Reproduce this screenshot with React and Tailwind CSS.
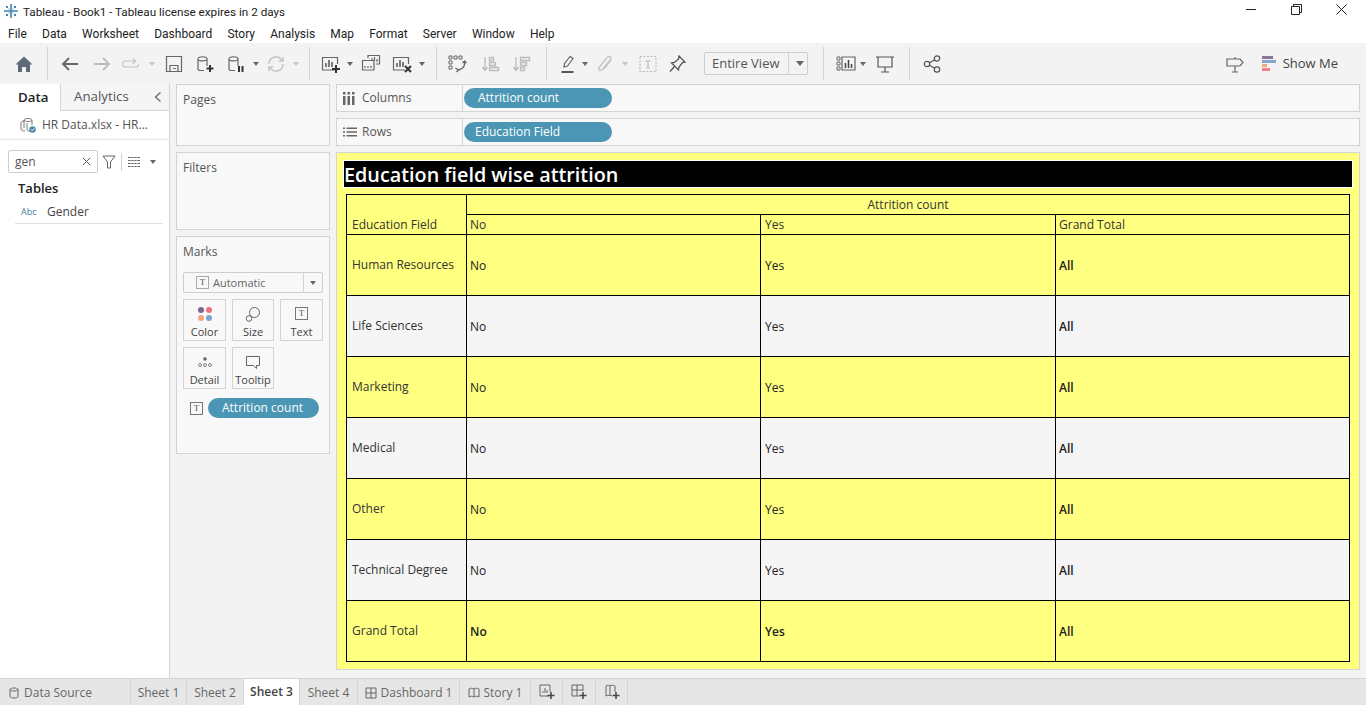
const sans = "font-['Open_Sans',sans-serif]";

function Caret({ className = '', light }) {
    return <div className={`h-0 w-0 border-x-[3px] border-t-[4px] border-x-transparent ${light ? 'border-t-[#c4c4c4]' : 'border-t-[#666]'} ${className}`}></div>
}

function Divider({ className = '' }) {
    return <div className={`h-[33px] w-px bg-[#d4d4d4] ${className}`}></div>
}

function Ico({ className = '', children, stroke = '#666' }) {
    return (
        <svg viewBox="0 0 20 20" fill="none" stroke={stroke} strokeWidth="1.2" className={`h-5 w-5 shrink-0 ${className}`}>
            {children}
        </svg>
    )
}

function Cylinder() {
    return <path d="M3 5c0-3 9-3 9 0v7M3 5c0 2.500 9 2.500 9 0M3 5v10c0 .8 1 1.500 3 1.500h3" />
}

function Toolbar() {
    return (
        <div className="flex h-[41px] items-center bg-[#f3f3f3]">
            <Ico className="ml-[14px]" stroke="none"><path fill="#5f6b78" d="M10 2.500 1.500 10.500H4V18h4v-5h4v5h4v-7.500h2.500z" /></Ico>
            <Divider className="ml-[13px]" />
            <Ico className="ml-[12px]" stroke="#666"><path strokeWidth="1.800" d="M18 10H3M9 4l-6 6 6 6" /></Ico>
            <Ico className="ml-[12px]" stroke="#bbb"><path strokeWidth="1.800" d="M2 10h15M11 4l6 6-6 6" /></Ico>
            <Ico className="ml-[9px]" stroke="#c4c4c4"><path d="M14 7H4.500a2.500 2.500 0 0 0 0 6H15a2.500 2.500 0 0 0 2.500-2.500M12 4.500 14.500 7 12 9.500" /></Ico>
            <Caret light className="ml-[8px]" />
            <Ico className="ml-[9px]"><path d="M2.500 2.500h15v15h-15zM6 17.500v-6h8v6M9 14.500h3" /></Ico>
            <Ico className="ml-[11px]">
                <Cylinder />
                <path stroke="#333" strokeWidth="2" d="M15 11v7M11.500 14.500h7" />
            </Ico>
            <Ico className="ml-[11px]">
                <Cylinder />
                <path stroke="#333" strokeWidth="2" d="M13 12v6M16.500 12v6" />
            </Ico>
            <Caret className="ml-[7px]" />
            <Ico className="ml-[7px]" stroke="#c4c4c4"><path strokeWidth="1.500" d="M3 10a7 7 0 0 1 12-5l2 2M17 10a7 7 0 0 1-12 5l-2-2M17 3v4h-4M3 17v-4h4" /></Ico>
            <Caret light className="ml-[7px]" />
            <Divider className="ml-[10px]" />
            <Ico className="ml-[11px]">
                <path d="M14 16H1.500V3.500h15V10" />
                <path stroke="#555" strokeWidth="1.500" d="M5 13V9M8 13V6M11 13V8" />
                <path stroke="#333" strokeWidth="2" d="M15 11v8M11 15h8" />
            </Ico>
            <Caret className="ml-[6px]" />
            <Ico className="ml-[8px]">
                <path d="M7 4V1.500h11.500V10H15M1.500 6.500H13V16H1.500z" />
                <path d="M11 6.500V4M13.500 6.500V3M16 8V5M4 14v-2M7 14v-2M10 14v-2" />
            </Ico>
            <Ico className="ml-[11px]">
                <path d="M13 16H1.500V3.500h15V10" />
                <path stroke="#555" strokeWidth="1.500" d="M5 13V9M8 13V6M11 13V8" />
                <path stroke="#333" strokeWidth="2" d="m13 12 6 6M19 12l-6 6" />
            </Ico>
            <Caret className="ml-[7px]" />
            <Divider className="ml-[11px]" />
            <Ico className="ml-[10px]">
                <path d="M2 2h3v3H2zM7 2h3v3H7zM12 2h3v3h-3zM2 7h3v3H2zM2 12h3v3H2z" strokeWidth="1" />
                <path strokeWidth="1.400" d="M17.500 7c1 4-1 8-6 9M8.500 14l3 2-2 2M15.500 9l2-2 2 2" />
            </Ico>
            <Ico className="ml-[13px]" stroke="#bbb"><path strokeWidth="1.300" d="M5 3v13M2.500 13 5 16.500 7.500 13M9.500 3.500h4v3h-4zM9.500 8.500h6v3h-6zM9.500 13.500h9v3h-9z" /></Ico>
            <Ico className="ml-[11px]" stroke="#bbb"><path strokeWidth="1.300" d="M5 3v13M2.500 13 5 16.500 7.500 13M9.500 3.500h9v3h-9zM9.500 8.500h6v3h-6zM9.500 13.500h4v3h-4z" /></Ico>
            <Divider className="ml-[15px]" />
            <Ico className="ml-[11px]">
                <path d="m6 13 .5-3.500L12 2.500l3 2-5.500 7.500z" />
                <path stroke="#444" strokeWidth="1.800" d="M3.500 18h12" />
            </Ico>
            <Caret className="ml-[4px]" />
            <Ico className="ml-[7px]" stroke="#c4c4c4"><path strokeWidth="1.400" d="m15 6-7.500 9.500c-2.500 2.500-5-.5-3-2.500L11.500 4c2.500-3 6 0 4 2.500L9 15" /></Ico>
            <Caret light className="ml-[7px]" />
            <Ico className="ml-[10px]" stroke="#bbb">
                <path strokeDasharray="2 1.500" d="M2 2.500h16v15H2z" />
                <path d="M7 7h6M10 7v7M8.500 14h3" />
            </Ico>
            <Ico className="ml-[9px]" stroke="#555"><path strokeWidth="1.300" d="M12 2 18 8l-2.500.5L12 13l-.5 3L4.500 9l3-.5 4-3.500zM7.500 12.500 3 17.500" /></Ico>
            <div className="ml-[17px] flex h-[23px] w-[104px] items-center rounded-[2px] border border-[#cdcdcd] text-[13px] text-[#555]">
                <span className="w-[84px] border-r border-[#d4d4d4] pl-[7px] leading-[21px]">Entire View</span>
                <Caret className="ml-[7px] border-x-[4px] border-t-[5px]" />
            </div>
            <Divider className="ml-[15px]" />
            <Ico className="ml-[12px]">
                <path strokeWidth="1" d="M1 3h3v3H1zM1 8h3v3H1zM1 13h3v3H1z" />
                <path d="M6 3h13v13H6z" />
                <path stroke="#444" strokeWidth="1.500" d="M9.500 14V9M12.500 14V6M15.500 14v-4" />
            </Ico>
            <Caret className="ml-[4px]" />
            <Ico className="ml-[9px]" stroke="#555"><path d="M3 3h14v10H3zM1 3h18M10 13v5M6 18h8" /></Ico>
            <Divider className="ml-[14px]" />
            <Ico className="ml-[12px]" stroke="#555"><circle cx="5" cy="10" r="2.700" /><circle cx="15" cy="4.500" r="2.700" /><circle cx="15" cy="15.500" r="2.700" /><path d="m7.500 8.800 5.200-3M7.500 11.200l5.200 3" /></Ico>
            <Ico className="ml-auto" stroke="#666"><path d="M2 5h13l3 3.500-3 3.500H2zM10 3v2M10 12v6M7 18h6" /></Ico>
            <div className="ml-[17px] flex w-[15px] flex-col gap-[1px]">
                <div className="h-[3px] w-[11px] bg-[#8a759e]"></div>
                <div className="h-[3px] w-[14px] bg-[#86a6cd]"></div>
                <div className="h-[3px] w-[5px] bg-[#f2a77c]"></div>
                <div className="h-[3px] w-[8px] bg-[#f27d85]"></div>
            </div>
            <span className="ml-[6px] mr-[28px] text-[13px] text-[#444]">Show Me</span>
        </div>
    )
}

function LeftPanel() {
    return (
        <div className="flex w-[170px] shrink-0 flex-col border-r border-[#d4d4d4] bg-white">
            <div className="flex h-[27px] bg-[#f5f5f5]">
                <div className="flex w-[61px] items-center border-r border-[#d4d4d4] bg-white pl-[18px] text-[13.300px] font-semibold text-[#222]">Data</div>
                <div className="flex flex-1 items-center justify-between border-b border-[#d4d4d4] pl-[13px] pr-[6px] text-[13.300px] text-[#555]">
                    <span>Analytics</span>
                    <svg viewBox="0 0 10 12" fill="none" stroke="#666" strokeWidth="1.200" className="h-3 w-[10px]"><path d="M7.500 1.500 2.500 6l5 4.500" /></svg>
                </div>
            </div>
            <div className="flex h-[29px] items-center border-b border-[#e6e6e6] pl-[20px] text-[12px] text-[#555]">
                <svg viewBox="0 0 16 16" fill="none" stroke="#777" strokeWidth="1" className="h-4 w-4 shrink-0">
                    <path d="M4 3c0-2 8-2 8 0v5M4 3c0 2 8 2 8 0M4 3v8M1 6c0-1 1-2 3-2M1 6v6c0 1.500 2 2 4 2M7 6v6c0 1.500 1 2 3 2" />
                    <circle cx="12.500" cy="12.500" r="3.300" fill="#4a8ea8" stroke="none" />
                    <path stroke="#fff" strokeWidth="0.900" d="m11 12.500 1.200 1.200 2-2.200" />
                </svg>
                <span className="ml-[6px]">HR Data.xlsx - HR...</span>
            </div>
            <div className="mt-[10px] flex items-center pl-[8px]">
                <div className="flex h-[23px] w-[90px] items-center justify-between rounded-[2px] border border-[#cdcdcd] pl-[6px] pr-[6px] text-[12px] text-[#555]">
                    <span>gen</span>
                    <svg viewBox="0 0 10 10" stroke="#555" strokeWidth="1.100" className="h-[9px] w-[9px]"><path d="m1 1 8 8M9 1 1 9" /></svg>
                </div>
                <svg viewBox="0 0 14 14" fill="none" stroke="#666" strokeWidth="1" className="ml-[4px] h-[14px] w-[14px]"><path d="M1 1h12L8.500 7v6h-3V7z" /></svg>
                <div className="ml-[5px] h-[18px] w-px bg-[#d4d4d4]"></div>
                <svg viewBox="0 0 12 10" stroke="#666" strokeWidth="1" className="ml-[6px] h-[10px] w-[12px]"><path d="M0 .5h12M0 3.500h12M0 6.500h12M0 9.500h12" /><path stroke="#fff" strokeWidth="0.700" d="M3 0v10M6 0v10M9 0v10" /></svg>
                <Caret className="ml-[10px]" />
            </div>
            <div className="mt-[6px] pl-[18px] text-[13px] font-semibold leading-[18px] text-[#222]">Tables</div>
            <div className="ml-[15px] mr-[6px] mt-[8px] flex h-[19px] items-center border-b border-[#e0e0e0] pb-[4px] pl-[6px] text-[12px] text-[#444]">
                <span className="w-[26px] text-[9px] text-[#4a7f99]">Abc</span>
                <span>Gender</span>
            </div>
        </div>
    )
}

function Card({ title, className = '', children }) {
    return (
        <div className={`border border-[#d4d4d4] bg-[#f8f8f8] px-[6px] pt-[6px] text-[12px] text-[#555] ${className}`}>
            <div className="leading-[17px]">{title}</div>
            {children}
        </div>
    )
}

function MarkBtn({ label, children }) {
    return (
        <div className="flex h-[42px] flex-col items-center border border-[#d4d4d4] pt-[2px] text-[11px] leading-[14px] text-[#444]">
            <div className="flex h-[23px] items-center">{children}</div>
            <span>{label}</span>
        </div>
    )
}

function TBox({ className = '' }) {
    return <div className={`flex h-[13px] w-[13px] items-center justify-center border border-[#777] font-['Liberation_Serif',serif] text-[9px] leading-none text-[#555] ${className}`}>T</div>
}

function Pill({ children, className = '' }) {
    return <div className={`flex h-[20px] items-center rounded-full bg-[#4a96b4] text-[12px] text-white ${className}`}>{children}</div>
}

function ShelfColumn() {
    return (
        <div className="flex w-[166px] shrink-0 flex-col gap-[6px] pl-[6px] pr-[6px]">
            <Card title="Pages" className="h-[62px]" />
            <Card title="Filters" className="h-[78px]" />
            <Card title="Marks" className="h-[218px]">
                <div className="mt-[12px] flex h-[21px] items-center rounded-[2px] border border-[#cdcdcd]">
                    <div className="flex flex-1 items-center border-r border-[#d4d4d4] pl-[12px] text-[11px] leading-[19px] text-[#666]">
                        <TBox className="border-[#aaa]" />
                        <span className="ml-[4px]">Automatic</span>
                    </div>
                    <Caret className="mx-[6px] border-x-[3.500px]" />
                </div>
                <div className="mt-[6px] grid grid-cols-[43px_42px_43px] gap-x-[6px] gap-y-[6px]">
                    <MarkBtn label="Color">
                        <div className="grid grid-cols-2 gap-[2px]">
                            <div className="h-[6px] w-[6px] rounded-full bg-[#7b668f]"></div>
                            <div className="h-[6px] w-[6px] rounded-full bg-[#f26d7d]"></div>
                            <div className="h-[6px] w-[6px] rounded-full bg-[#f2a77c]"></div>
                            <div className="h-[6px] w-[6px] rounded-full bg-[#7da5cf]"></div>
                        </div>
                    </MarkBtn>
                    <MarkBtn label="Size">
                        <svg viewBox="0 0 16 16" fill="none" stroke="#666" strokeWidth="1" className="h-4 w-4"><circle cx="9.500" cy="6.500" r="5" /><circle cx="4" cy="12.500" r="2.800" fill="#f8f8f8" /></svg>
                    </MarkBtn>
                    <MarkBtn label="Text"><TBox /></MarkBtn>
                    <MarkBtn label="Detail">
                        <svg viewBox="0 0 16 12" fill="none" stroke="#666" strokeWidth="0.800" className="h-3 w-4"><circle cx="8" cy="3" r="1.800" fill="#666" stroke="none" /><circle cx="3" cy="9" r="1.500" /><circle cx="8" cy="9" r="1.500" /><circle cx="13" cy="9" r="1.500" /></svg>
                    </MarkBtn>
                    <MarkBtn label="Tooltip">
                        <svg viewBox="0 0 16 16" fill="none" stroke="#666" strokeWidth="1" className="h-4 w-4"><path d="M1.500 2.500h13v9h-3v3l-3-3h-7z" /></svg>
                    </MarkBtn>
                </div>
                <div className="mt-[9px] flex items-center pl-[7px]">
                    <TBox />
                    <Pill className="ml-[5px] w-[111px] pl-[14px]">Attrition count</Pill>
                </div>
            </Card>
        </div>
    )
}

function Shelf({ label, icon, pill, pillClass }) {
    return (
        <div className="flex h-[28px] items-center border border-[#d4d4d4] bg-[#f8f8f8] text-[12px] text-[#555]">
            <div className="flex w-[126px] shrink-0 items-center border-r border-[#d4d4d4] pl-[6px] leading-[26px]">
                <div className="flex w-[13px] justify-start">{icon}</div>
                <span className="ml-[6px]">{label}</span>
            </div>
            <Pill className={`ml-[1px] w-[148px] ${pillClass}`}>{pill}</Pill>
        </div>
    )
}

const rows = ['Human Resources', 'Life Sciences', 'Marketing', 'Medical', 'Other', 'Technical Degree']

function DataTable() {
    const cell = 'border border-black align-middle'
    return (
        <table className="ml-[3px] mt-[6px] w-[1003px] table-fixed border-collapse text-[12px] text-[#333]">
            <colgroup>
                <col className="w-[120px]" />
                <col className="w-[294px]" />
                <col className="w-[295px]" />
                <col className="w-[294px]" />
            </colgroup>
            <tbody>
                <tr className="h-[20px]">
                    <td rowSpan={2} className={`${cell} pl-[5px] pt-[20px]`}>Education Field</td>
                    <td colSpan={3} className={`${cell} text-center`}>Attrition count</td>
                </tr>
                <tr className="h-[20px]">
                    <td className={`${cell} pl-[3px]`}>No</td>
                    <td className={`${cell} pl-[4px]`}>Yes</td>
                    <td className={`${cell} pl-[3px]`}>Grand Total</td>
                </tr>
                {rows.map((r, i) => (
                    <tr key={r} className={`h-[61px] ${i % 2 ? 'bg-[#f5f5f5]' : ''}`}>
                        <td className={`${cell} pl-[5px]`}>{r}</td>
                        <td className={`${cell} pl-[3px] pt-[2px] text-[#222]`}>No</td>
                        <td className={`${cell} pl-[4px] pt-[2px] text-[#222]`}>Yes</td>
                        <td className={`${cell} pl-[3px] pt-[2px] font-semibold text-[#222]`}>All</td>
                    </tr>
                ))}
                <tr className="h-[61px]">
                    <td className={`${cell} pl-[5px]`}>Grand Total</td>
                    <td className={`${cell} pl-[3px] pt-[2px] font-semibold text-[#222]`}>No</td>
                    <td className={`${cell} pl-[4px] pt-[2px] font-semibold text-[#222]`}>Yes</td>
                    <td className={`${cell} pl-[3px] pt-[2px] font-semibold text-[#222]`}>All</td>
                </tr>
            </tbody>
        </table>
    )
}

function SheetTab({ children, className = '' }) {
    return <div className={`flex items-center justify-center border-r border-[#d4d4d4] ${className}`}>{children}</div>
}

function TabStrip() {
    return (
        <div className="flex h-[27px] border-t border-[#d4d4d4] bg-[#e6e6e6] text-[12px] text-[#666]">
            <SheetTab className="w-[131px] justify-start pl-[9px] pt-[1px]">
                <svg viewBox="0 0 10 12" fill="none" stroke="#666" strokeWidth="1" className="h-3 w-[10px]"><path d="M1 2.500c0-2 8-2 8 0v7c0 2-8 2-8 0zM1 2.500c0 2 8 2 8 0" /></svg>
                <span className="ml-[5px]">Data Source</span>
            </SheetTab>
            <SheetTab className="w-[56px] pt-[1px]">Sheet 1</SheetTab>
            <SheetTab className="w-[57px] pt-[1px]">Sheet 2</SheetTab>
            <SheetTab className="w-[56px] bg-white pb-[1px] font-semibold text-[#444]">Sheet 3</SheetTab>
            <SheetTab className="w-[58px] pt-[1px]">Sheet 4</SheetTab>
            <SheetTab className="w-[102px] pt-[1px]">
                <svg viewBox="0 0 12 12" fill="none" stroke="#666" strokeWidth="1" className="h-3 w-3"><path d="M1 1h10v10H1zM6 1v10M1 6h10" /></svg>
                <span className="ml-[4px]">Dashboard 1</span>
            </SheetTab>
            <SheetTab className="w-[71px] pt-[1px]">
                <svg viewBox="0 0 12 12" fill="none" stroke="#666" strokeWidth="1" className="h-3 w-3"><path d="M1 2c2-1 3-1 5 0 2-1 3-1 5 0v8c-2-1-3-1-5 0-2-1-3-1-5 0zM6 2v8" /></svg>
                <span className="ml-[4px]">Story 1</span>
            </SheetTab>
            <SheetTab className="w-[32px]">
                <svg viewBox="0 0 16 16" fill="none" stroke="#666" strokeWidth="1" className="h-4 w-4"><path d="M10 12H1V1h10v7" /><path d="M4 9V7M6 9V4M8 9V6" /><path stroke="#444" strokeWidth="1.500" d="M12 8v7M8.500 11.500h7" /></svg>
            </SheetTab>
            <SheetTab className="w-[33px]">
                <svg viewBox="0 0 16 16" fill="none" stroke="#666" strokeWidth="1" className="h-4 w-4"><path d="M8 12H1V1h11v6M6 1v11M1 6h11" /><path stroke="#444" strokeWidth="1.500" d="M12 8v7M8.500 11.500h7" /></svg>
            </SheetTab>
            <SheetTab className="w-[32px]">
                <svg viewBox="0 0 16 16" fill="none" stroke="#666" strokeWidth="1" className="h-4 w-4"><path d="M8 12c-2-1-4-1-6 0V2c2-1 3-1 4 0 1-1 3-1 5 0v6M6 2v10" /><path stroke="#444" strokeWidth="1.500" d="M12 8v7M8.500 11.500h7" /></svg>
            </SheetTab>
        </div>
    )
}

export default function App() {
    return (
        <div className={`flex h-[705px] w-[1366px] flex-col overflow-hidden bg-white ${sans}`}>
            {/* title bar */}
            <div className="flex h-[22px] items-start pl-[3px] pt-[3px] font-['Roboto',sans-serif] text-[11.700px] text-[#222]">
                <svg viewBox="0 0 16 16" fill="#3f86ad" className="h-4 w-4">
                    <path d="M7.200 1h1.600v14H7.200zM1 7.200h14v1.600H1z" />
                    <path d="M3 3h2v2H3zM11 3h2v2h-2zM3 11h2v2H3zM11 11h2v2h-2z" />
                    <path d="M5.500 5.500h1v1h-1zM9.500 5.500h1v1h-1zM5.500 9.500h1v1h-1zM9.500 9.500h1v1h-1z" />
                </svg>
                <span className="ml-[4px] leading-[18px]">Tableau - Book1 - Tableau license expires in 2 days</span>
                <svg viewBox="0 0 11 11" stroke="#222" strokeWidth="1" className="ml-auto mt-[1px] h-[11px] w-[11px]"><path d="M0 5.500h10" /></svg>
                <svg viewBox="0 0 11 11" fill="none" stroke="#222" strokeWidth="1" className="ml-[34px] mt-[1px] h-[11px] w-[11px]"><path d="M.5 2.500h8v8h-8zM2.500 2.500v-2h8v8h-2" /></svg>
                <svg viewBox="0 0 11 11" stroke="#222" strokeWidth="1" className="ml-[34px] mr-[19px] mt-[1px] h-[11px] w-[11px]"><path d="m.5.500 10 10M10.500.500l-10 10" /></svg>
            </div>
            {/* menu */}
            <div className="flex h-[21px] items-center gap-[15.200px] pl-[8px] pt-[2px] font-['Roboto',sans-serif] text-[12px] text-[#222]">
                <span>File</span><span>Data</span><span>Worksheet</span><span>Dashboard</span><span>Story</span><span>Analysis</span><span>Map</span><span>Format</span><span>Server</span><span>Window</span><span>Help</span>
            </div>
            <Toolbar />
            <div className="flex min-h-0 flex-1 bg-[#f3f3f3]">
                <LeftPanel />
                <ShelfColumn />
                <div className="flex flex-1 flex-col pr-[6px]">
                    <div className="flex flex-col gap-[6px]">
                        <Shelf label="Columns" pill="Attrition count" pillClass="pl-[14px]" icon={
                            <svg viewBox="0 0 12 13" fill="#666" className="h-[13px] w-3"><path d="M0 4h2.500v9H0zM4.500 4H7v9H4.500zM9 4h2.500v9H9zM0 0h2.500v2.500H0zM4.500 0H7v2.500H4.500zM9 0h2.500v2.500H9z" /></svg>
                        } />
                        <Shelf label="Rows" pill="Education Field" pillClass="pl-[11px]" icon={
                            <svg viewBox="0 0 14 12" fill="#666" className="h-3 w-[14px] shrink-0"><path d="M3.500 1.500H14V3H3.500zM3.500 5.250H14v1.500H3.500zM3.500 9H14v1.500H3.500zM0 1.500h2V3H0zM0 5.250h2v1.500H0zM0 9h2v1.500H0z" /></svg>
                        } />
                    </div>
                    <div className="mt-[6px] h-[518px] border border-[#d4d4d4] bg-[#ffff80] px-[6px] pt-[7px]">
                        <div className="h-[28px] border border-white bg-black text-[19.800px] font-semibold leading-[27px] text-white">Education field wise attrition</div>
                        <DataTable />
                    </div>
                </div>
            </div>
            <TabStrip />
        </div>
    )
}
